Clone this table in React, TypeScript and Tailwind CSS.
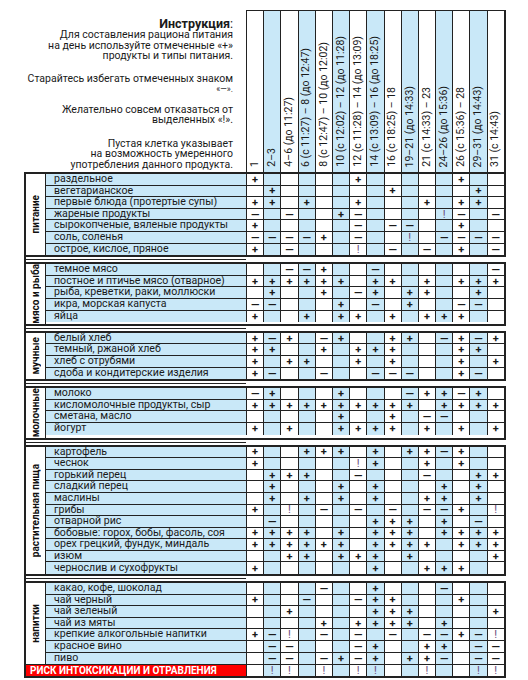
import React from 'react';

type Row = { n: string; m: string };
type Group = { label: string; rows: Row[]; risk?: string };

const groups: Group[] = [
  {
    label: 'питание',
    rows: [
      { n: 'раздельное', m: '+.....+.....+..' },
      { n: 'вегетарианское', m: '.+......+....+.' },
      { n: 'первые блюда (протертые супы)', m: '++.+..+...+.++.' },
      { n: 'жареные продукты', m: '-.-..+-....!-.-' },
      { n: 'сырокопченые, вяленые продукты', m: '+.....-.--..+..' },
      { n: 'соль, соленья', m: '----+.-..!.----' },
      { n: 'острое, кислое, пряное', m: '+.-...!.-.-.+.-' },
    ],
  },
  {
    label: 'мясо и рыба',
    rows: [
      { n: 'темное мясо', m: '..--+..-......-' },
      { n: 'постное и птичье мясо (отварное)', m: '++++++.++.+.+++' },
      { n: 'рыба, креветки, раки, моллюски', m: '.+..+.-+.++..+.' },
      { n: 'икра, морская капуста', m: '--...+.-.+..--.' },
      { n: 'яйца', m: '+..+.++.+.+++..' },
    ],
  },
  {
    label: 'мучные',
    rows: [
      { n: 'белый хлеб', m: '+-+.-+..++.-+-+' },
      { n: 'темный, ржаной хлеб', m: '++..+.+++...++.' },
      { n: 'хлеб с отрубями', m: '+.++..+.+...+.+' },
      { n: 'сдоба и кондитерские изделия', m: '+-..-..---..+-.' },
    ],
  },
  {
    label: 'молочные',
    rows: [
      { n: 'молоко', m: '-+...+...-++-+.' },
      { n: 'кисломолочные продукты, сыр', m: '++++++++++.++++' },
      { n: 'сметана, масло', m: '.....+..+.--...' },
      { n: 'йогурт', m: '+.+..++++.+.+.+' },
    ],
  },
  {
    label: 'растительная пища',
    rows: [
      { n: 'картофель', m: '+..+++.+.++-+..' },
      { n: 'чеснок', m: '+.....!+..+.+..' },
      { n: 'горький перец', m: '.+++..-...-..++' },
      { n: 'сладкий перец', m: '.+...+.+...+.+.' },
      { n: 'маслины', m: '.+.+.+.+..++.+.' },
      { n: 'грибы', m: '+.!.-.-.-.--+.!' },
      { n: 'отварной рис', m: '.-.....+++.+.-.' },
      { n: 'бобовые: горох, бобы, фасоль, соя', m: '++++.+.+++.++++' },
      { n: 'орех грецкий, фундук, миндаль', m: '++++++.++++.+++' },
      { n: 'изюм', m: '..++.+++.+....+' },
      { n: 'чернослив и сухофрукты', m: '+......+..+++..' },
    ],
  },
  {
    label: 'напитки',
    rows: [
      { n: 'какао, кофе, шоколад', m: '....-..+...-...' },
      { n: 'чай черный', m: '+..-..-++...+..' },
      { n: 'чай зеленый', m: '..+....+++....+' },
      { n: 'чай из мяты', m: '....+.++++.+...' },
      { n: 'крепкие алкогольные напитки', m: '+-!.-.-.-.--+-!' },
      { n: 'красное вино', m: '.--...-+..++.--' },
      { n: 'пиво', m: '.--.-+-+.++-.--' },
    ],
    risk: '.!!.!.!!..!..!!',
  },
];

const cols = [
  '1',
  '2–3',
  '4–6 (до 11:27)',
  '6 (с 11:27) – 8 (до 12:47)',
  '8 (с 12:47) – 10 (до 12:02)',
  '10 (с 12:02) – 12 (до 11:28)',
  '12 (с 11:28) – 14 (до 13:09)',
  '14 (с 13:09) – 16 (до 18:25)',
  '16 (с 18:25) – 18',
  '19–21 (до 14:33)',
  '21 (с 14:33) – 23',
  '24–26 (до 15:36)',
  '26 (с 15:36) – 28',
  '29–31 (до 14:43)',
  '31 (с 14:43)',
];

function Mark({ c }: { c: string }) {
  if (c === '+') return <span className="font-bold text-[#1a1a1a]">+</span>;
  if (c === '-') return <span className="font-bold text-[#1a1a1a]">—</span>;
  if (c === '!') return <span className="text-[#6a4a7a]">!</span>;
  return null;
}

function Cells({ m }: { m: string }) {
  return (
    <>
      {m.split('').map((c, i) => (
        <div
          key={i}
          className={`w-[17.2px] shrink-0 border-l border-[#222] flex items-center justify-center text-[11px] leading-none ${
            i % 2 === 1 ? 'bg-[#c9e8f8]' : 'bg-white'
          }`}
        >
          <Mark c={c} />
        </div>
      ))}
    </>
  );
}

function GroupBox({ g }: { g: Group }) {
  return (
    <div className="ml-[24px] w-[482px] border-2 border-[#222] flex flex-col">
      <div className="flex">
        <div className="w-[20px] shrink-0 border-r border-[#222] bg-white flex items-center justify-center">
          <span className="[writing-mode:vertical-rl] rotate-180 whitespace-nowrap text-[10px] font-bold leading-none text-[#111]">
            {g.label}
          </span>
        </div>
        <div className="flex-1 flex flex-col">
          {g.rows.map((r, i) => (
            <div
              key={i}
              className={`flex h-[11.6px] ${i < g.rows.length - 1 ? 'border-b border-[#222]' : ''}`}
            >
              <div className="w-[200px] shrink-0 bg-[#c9e8f8] pl-[8px] flex items-center text-[10.6px] leading-none text-[#1a1a1a] whitespace-nowrap">
                {r.n}
              </div>
              <Cells m={r.m} />
            </div>
          ))}
        </div>
      </div>
      {g.risk && (
        <div className="flex h-[11.6px] border-t border-[#222]">
          <div className="w-[220px] shrink-0 bg-[#ff0000] pl-[4px] flex items-center text-[10px] font-bold text-white leading-none whitespace-nowrap">
            РИСК ИНТОКСИКАЦИИ И ОТРАВЛЕНИЯ
          </div>
          <Cells m={g.risk} />
        </div>
      )}
    </div>
  );
}

function Gap() {
  return (
    <div className="ml-[24px] w-[222px] h-[5px] border-l-2 border-[#222] pt-[2px]">
      <div className="h-px bg-[#222]" />
    </div>
  );
}

export default function App() {
  return (
    <div className="w-[528px] h-[680px] bg-white font-['Roboto','Noto_Sans',sans-serif] text-[#1a1a1a] overflow-hidden">
      <div className="flex">
        <div className="w-[246px] shrink-0 h-[172px] pr-[13px] pt-[17px] text-right text-[10.5px] flex flex-col">
          <div className="h-[13px] leading-[13px] text-[12.5px]">
            <span className="font-bold">Инструкция</span>:
          </div>
          <div className="h-[10.7px] leading-[10.7px]">Для составления рациона питания</div>
          <div className="h-[10.7px] leading-[10.7px]">на день используйте отмеченные «+»</div>
          <div className="h-[10.7px] leading-[10.7px]">продукты и типы питания.</div>
          <div className="h-[10.7px] leading-[10.7px] mt-[11.5px]">Старайтесь избегать отмеченных знаком</div>
          <div className="h-[10.7px] leading-[10.7px] text-[8.5px]">«—».</div>
          <div className="h-[10.7px] leading-[10.7px] mt-[9.6px]">Желательно совсем отказаться от</div>
          <div className="h-[10.7px] leading-[10.7px]">выделенных «!».</div>
          <div className="h-[10.7px] leading-[10.7px] mt-[12.6px]">Пустая клетка указывает</div>
          <div className="h-[10.7px] leading-[10.7px]">на возможность умеренного</div>
          <div className="h-[10.7px] leading-[10.7px]">употребления данного продукта.</div>
        </div>
        <div className="mt-[10px] h-[162px] flex border-r-2 border-[#222]">
          {cols.map((c, i) => (
            <div
              key={i}
              className={`w-[17.2px] shrink-0 border-l border-t border-[#222] flex items-end justify-center pb-[5px] ${
                i % 2 === 1 ? 'bg-[#c9e8f8]' : 'bg-white'
              }`}
            >
              <span className="[writing-mode:vertical-rl] rotate-180 whitespace-nowrap text-[10.5px] leading-none text-[#1a1a1a]">
                {c}
              </span>
            </div>
          ))}
        </div>
      </div>
      {groups.map((g, i) => (
        <React.Fragment key={i}>
          {i > 0 && <Gap />}
          <GroupBox g={g} />
        </React.Fragment>
      ))}
    </div>
  );
}
